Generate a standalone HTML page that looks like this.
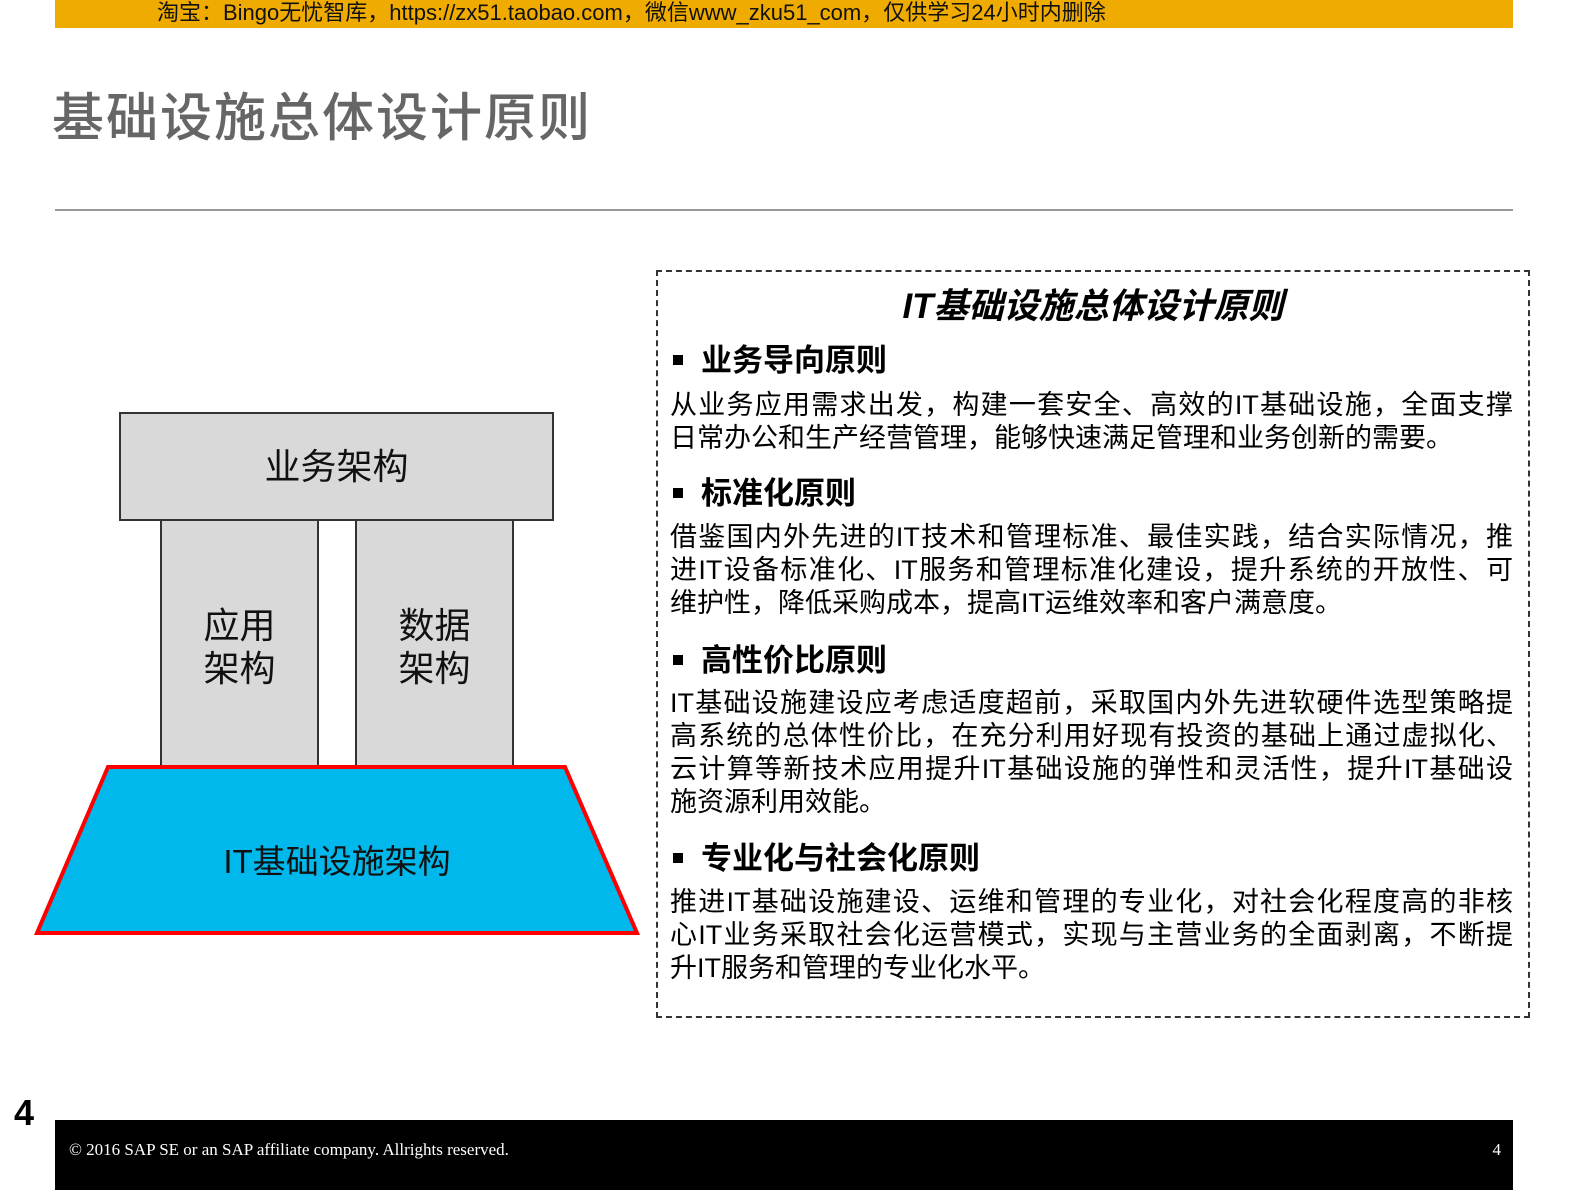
<!DOCTYPE html>
<html><head><meta charset="utf-8"><style>
body{margin:0;width:1587px;height:1190px;position:relative;background:#fff;overflow:hidden;font-family:"Liberation Sans","Noto Sans CJK SC",sans-serif}
.a{position:absolute}
.top{left:55px;top:0;width:1458px;height:28px;background:#f0ab00;color:#111;font-size:22px;line-height:26px;white-space:nowrap}
.title{left:52px;top:76px;font-size:52px;color:#666;font-family:"Noto Sans CJK SC",sans-serif;font-weight:500;letter-spacing:2px}
.box{left:656px;top:270px;width:870px;height:744px;border:2px dashed #333}
.h{font-size:31px;font-weight:bold;color:#000;white-space:nowrap}
.h:before{content:"";display:inline-block;width:10px;height:10px;background:#000;margin:0 18px 6px 6px;vertical-align:middle}
.p{left:670px;width:843px;font-size:27px;line-height:33px;color:#000}
.p div{text-align:justify;text-align-last:justify;white-space:nowrap}
.p div.l{text-align-last:left}
.g{background:#d9d9d9;border:2px solid #333;box-sizing:border-box;text-align:center;color:#111;font-size:36px}
</style></head><body>
<div class="a top"><span style="margin-left:102px">淘宝：Bingo无忧智库，https://zx51.taobao.com，微信www_zku51_com，仅供学习24小时内删除</span></div>
<div class="a title">基础设施总体设计原则</div>
<div class="a" style="left:55px;top:209px;width:1458px;height:2px;background:#999"></div>

<div class="a g" style="left:160px;top:510px;width:159px;height:259px;padding-top:92px;line-height:43px">应用<br>架构</div>
<div class="a g" style="left:355px;top:510px;width:159px;height:259px;padding-top:92px;line-height:43px">数据<br>架构</div>
<div class="a g" style="left:119px;top:412px;width:435px;height:109px;line-height:105px">业务架构</div>
<svg class="a" style="left:0;top:0" width="700" height="1000"><polygon points="108,767 565,767 637,933 37,933" fill="#00b8eb" stroke="#f00" stroke-width="4"/></svg>
<div class="a" style="left:37px;top:835px;width:600px;text-align:center;font-size:33px;color:#111">IT基础设施架构</div>

<div class="a box"></div>
<div class="a" style="left:656px;top:278px;width:874px;text-align:center;font-size:35px;font-weight:bold;font-style:italic">IT基础设施总体设计原则</div>
<div class="a h" style="left:667px;top:335px">业务导向原则</div>
<div class="a p" style="top:389px"><div>从业务应用需求出发，构建一套安全、高效的IT基础设施，全面支撑</div><div class="l">日常办公和生产经营管理，能够快速满足管理和业务创新的需要。</div></div>
<div class="a h" style="left:667px;top:468px">标准化原则</div>
<div class="a p" style="top:521px"><div>借鉴国内外先进的IT技术和管理标准、最佳实践，结合实际情况，推</div><div>进IT设备标准化、IT服务和管理标准化建设，提升系统的开放性、可</div><div class="l">维护性，降低采购成本，提高IT运维效率和客户满意度。</div></div>
<div class="a h" style="left:667px;top:635px">高性价比原则</div>
<div class="a p" style="top:687px"><div>IT基础设施建设应考虑适度超前，采取国内外先进软硬件选型策略提</div><div>高系统的总体性价比，在充分利用好现有投资的基础上通过虚拟化、</div><div>云计算等新技术应用提升IT基础设施的弹性和灵活性，提升IT基础设</div><div class="l">施资源利用效能。</div></div>
<div class="a h" style="left:667px;top:833px">专业化与社会化原则</div>
<div class="a p" style="top:886px"><div>推进IT基础设施建设、运维和管理的专业化，对社会化程度高的非核</div><div>心IT业务采取社会化运营模式，实现与主营业务的全面剥离，不断提</div><div class="l">升IT服务和管理的专业化水平。</div></div>

<div class="a" style="left:14px;top:1092px;font-size:36px;font-weight:bold">4</div>
<div class="a" style="left:55px;top:1120px;width:1458px;height:70px;background:#000;color:#fff;font-family:'Liberation Serif',serif;font-size:17px">
<span class="a" style="left:14px;top:20px">© 2016 SAP SE or an SAP affiliate company. Allrights reserved.</span>
<span class="a" style="right:12px;top:20px">4</span></div>
</body></html>
